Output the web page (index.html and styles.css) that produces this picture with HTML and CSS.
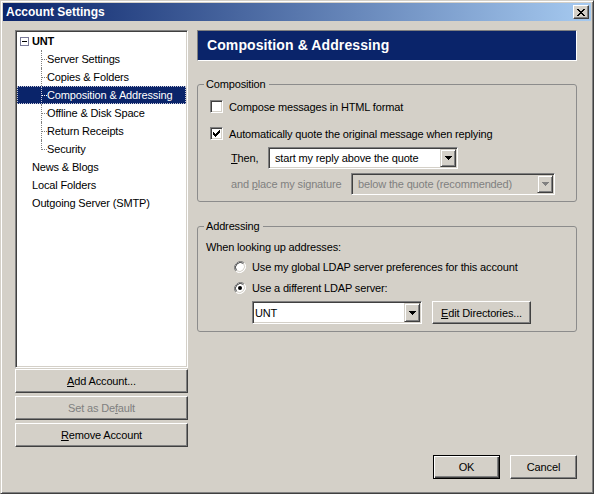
FILE: index.html
```html
<!DOCTYPE html>
<html>
<head>
<meta charset="utf-8">
<title>Account Settings</title>
<link rel="stylesheet" href="styles.css">
</head>
<body>
<div class="window">
  <div class="titlebar">
    <span class="title">Account Settings</span>
    <span class="close"><svg width="8" height="7" viewBox="0 0 8 7" shape-rendering="crispEdges"><path d="M0 0h2v1H0zM6 0h2v1H6zM1 1h2v1H1zM5 1h2v1H5zM2 2h4v1H2zM3 3h2v1H3zM2 4h4v1H2zM1 5h2v1H1zM5 5h2v1H5zM0 6h2v1H0zM6 6h2v1H6z" fill="#000"/></svg></span>
  </div>
  <div class="body">
    <div class="main">
      <div class="sidebar">
        <div class="tree">
          <div class="row root"><span class="twisty"></span><b>UNT</b></div>
          <div class="row child">Server Settings</div>
          <div class="row child">Copies &amp; Folders</div>
          <div class="row child sel">Composition &amp; Addressing</div>
          <div class="row child">Offline &amp; Disk Space</div>
          <div class="row child">Return Receipts</div>
          <div class="row child last">Security</div>
          <div class="row top">News &amp; Blogs</div>
          <div class="row top">Local Folders</div>
          <div class="row top">Outgoing Server (SMTP)</div>
        </div>
        <div class="btn side add"><span><u>A</u>dd Account...</span></div>
        <div class="btn side disabled"><span>Set as De<u>f</u>ault</span></div>
        <div class="btn side"><span><u>R</u>emove Account</span></div>
      </div>
      <div class="panel">
        <div class="header">Composition &amp; Addressing</div>
        <fieldset class="group comp">
          <legend>Composition</legend>
          <div class="opt first">
            <span class="check"></span>
            <span>Compose messages in HTML format</span>
          </div>
          <div class="opt second">
            <span class="check"><svg width="7" height="7" viewBox="0 0 7 7" shape-rendering="crispEdges"><path d="M6 0h1v1H6zM5 1h2v1H5zM0 2h1v1H0zM4 2h3v1H4zM0 3h2v1H0zM3 3h3v1H3zM0 4h5v1H0zM1 5h3v1H1zM2 6h1v1H2z" fill="#000"/></svg></span>
            <span>Automatically quote the original message when replying</span>
          </div>
          <div class="line then">
            <span class="lbl lbl-then"><u>T</u>hen,</span>
            <div class="combo w-then">
              <span class="val">start my reply above the quote</span>
              <span class="drop"><svg width="7" height="4" viewBox="0 0 7 4" shape-rendering="crispEdges"><path d="M0 0h7v1H0zM1 1h5v1H1zM2 2h3v1H2zM3 3h1v1H3z" fill="#000"/></svg></span>
            </div>
          </div>
          <div class="line sig">
            <span class="lbl lbl-sig dis">and <u>p</u>lace my signature</span>
            <div class="combo w-sig disabled">
              <span class="val">below the quote (recommended)</span>
              <span class="drop"><svg width="7" height="4" viewBox="0 0 7 4" shape-rendering="crispEdges"><path d="M0 0h7v1H0zM1 1h5v1H1zM2 2h3v1H2zM3 3h1v1H3z" fill="#808080"/></svg></span>
            </div>
          </div>
        </fieldset>
        <fieldset class="group addr">
          <legend>Addressing</legend>
          <div class="when">When looking up addresses:</div>
          <div class="radio-row r1">
            <svg class="radio" width="12" height="12" viewBox="0 0 12 12"><circle cx="6" cy="6" r="5.5" fill="#fff"/><path d="M10.2 1.8A6 6 0 0 0 1.8 10.2" fill="none" stroke="#808080" stroke-width="1"/><path d="M1.8 10.2A6 6 0 0 0 10.2 1.8" fill="none" stroke="#fff" stroke-width="1"/><path d="M9.5 2.5A5 5 0 0 0 2.5 9.5" fill="none" stroke="#404040" stroke-width="1"/><path d="M2.5 9.5A5 5 0 0 0 9.5 2.5" fill="none" stroke="#d4d0c8" stroke-width="1"/></svg>
            <span>Use my global LDAP server preferences for this account</span>
          </div>
          <div class="radio-row r2">
            <svg class="radio" width="12" height="12" viewBox="0 0 12 12"><circle cx="6" cy="6" r="5.5" fill="#fff"/><path d="M10.2 1.8A6 6 0 0 0 1.8 10.2" fill="none" stroke="#808080" stroke-width="1"/><path d="M1.8 10.2A6 6 0 0 0 10.2 1.8" fill="none" stroke="#fff" stroke-width="1"/><path d="M9.5 2.5A5 5 0 0 0 2.5 9.5" fill="none" stroke="#404040" stroke-width="1"/><path d="M2.5 9.5A5 5 0 0 0 9.5 2.5" fill="none" stroke="#d4d0c8" stroke-width="1"/><circle cx="6" cy="6" r="2" fill="#000"/></svg>
            <span>Use a different LDAP server:</span>
          </div>
          <div class="ldap-row">
            <div class="combo edit w-ldap">
              <span class="val">UNT</span>
              <span class="drop"><svg width="7" height="4" viewBox="0 0 7 4" shape-rendering="crispEdges"><path d="M0 0h7v1H0zM1 1h5v1H1zM2 2h3v1H2zM3 3h1v1H3z" fill="#000"/></svg></span>
            </div>
            <div class="btn edit-dirs"><span><u>E</u>dit Directories...</span></div>
          </div>
        </fieldset>
      </div>
    </div>
    <div class="footer">
      <div class="btn dlg default"><span>OK</span></div>
      <div class="btn dlg"><span>Cancel</span></div>
    </div>
  </div>
</div>
</body>
</html>
```
FILE: styles.css
```css
* { box-sizing: border-box; }
html, body { margin: 0; padding: 0; }
body {
  width: 594px;
  height: 494px;
  background: #d4d0c8;
  font: 11px "Liberation Sans", Arial, sans-serif;
  letter-spacing: -0.15px;
  color: #000;
}
u { text-decoration: underline; text-underline-offset: 1px; }

.window {
  width: 594px;
  height: 494px;
  border: 1px solid;
  border-color: #d4d0c8 #404040 #404040 #d4d0c8;
  box-shadow: inset 1px 1px #fff, inset -1px -1px #808080;
  padding: 2px;
  display: flex;
  flex-direction: column;
  background: #d4d0c8;
}

.titlebar {
  flex: none;
  height: 18px;
  display: flex;
  align-items: center;
  justify-content: space-between;
  padding: 0 2px 0 3px;
  background: linear-gradient(to right, #0a246a, #a6caf0);
}
.title { color: #fff; font-weight: bold; font-size: 12px; line-height: 18px; letter-spacing: 0; }
.close {
  width: 16px;
  height: 14px;
  display: flex;
  align-items: center;
  justify-content: center;
  background: #d4d0c8;
  border: 1px solid;
  border-color: #fff #404040 #404040 #fff;
  box-shadow: inset -1px -1px #808080;
}

.body { flex: 1; padding: 9px 14px 0 12px; display: flex; flex-direction: column; }
.main { display: flex; gap: 9px; }

.sidebar { width: 173px; display: flex; flex-direction: column; }
.tree {
  height: 338px;
  background: #fff;
  border: 1px solid;
  border-color: #808080 #fff #fff #808080;
  box-shadow: inset 1px 1px #404040, inset -1px -1px #d4d0c8;
  padding: 1px;
}
.row { position: relative; height: 18px; line-height: 18px; white-space: nowrap; }
.root { display: flex; align-items: center; padding-left: 3px; }
.twisty {
  width: 9px;
  height: 9px;
  border: 1px solid #7a7a9a;
  margin-right: 3px;
  position: relative;
  background: #fff;
}
.twisty::after {
  content: "";
  position: absolute;
  left: 1px;
  top: 3px;
  width: 5px;
  height: 1px;
  background: #000;
}
.child { padding-left: 30px; }
.child::before {
  content: "";
  position: absolute;
  left: 24px;
  top: 9px;
  width: 6px;
  border-top: 1px dotted #808080;
}
.child::after {
  content: "";
  position: absolute;
  left: 24px;
  top: 0;
  height: 18px;
  border-left: 1px dotted #808080;
}
.child.last::after { height: 10px; }
.top { padding-left: 15px; }
.sel {
  background: #0a246a;
  color: #fff;
  outline: 1px dotted #c8c8d8;
  outline-offset: -1px;
}
.sel::before { border-top-color: #fff; }
.sel::after { border-left-color: #c8c8d8; }

.btn {
  display: flex;
  align-items: center;
  justify-content: center;
  background: #d4d0c8;
  border: 1px solid;
  border-color: #fff #404040 #404040 #fff;
  box-shadow: inset -1px -1px #808080;
  height: 24px;
  white-space: nowrap;
}
.side { margin-top: 3px; }
.side.add { margin-top: 1px; }
.disabled { color: #808080; }

.panel { width: 380px; display: flex; flex-direction: column; }
.header {
  height: 31px;
  background: #0a246a;
  border: 1px solid;
  border-color: #808080 #fff #fff #808080;
  color: #fff;
  font-weight: bold;
  font-size: 14px;
  letter-spacing: 0.1px;
  line-height: 29px;
  padding-left: 9px;
}

.group {
  margin: 0;
  padding: 0 0 6px 0;
  min-width: 0;
  border: 1px solid #8c8c8c;
  border-radius: 3px;
}
.group legend {
  margin-left: 6px;
  padding: 0 3px 0 2px;
  line-height: 13px;
  height: 13px;
}
.comp { margin-top: 17px; }
.addr { margin-top: 18px; padding-bottom: 7px; }

.opt { display: flex; align-items: center; height: 19px; padding-left: 12px; gap: 6px; }
.opt.first { margin-top: 6px; }
.opt.second { margin-top: 8px; }
.check {
  width: 13px;
  height: 13px;
  flex: none;
  background: #fff;
  border: 1px solid;
  border-color: #808080 #fff #fff #808080;
  box-shadow: inset 1px 1px #404040, inset -1px -1px #d4d0c8;
  display: flex;
  align-items: center;
  justify-content: center;
}

.line { display: flex; align-items: center; padding-left: 33px; margin-top: 4px; }
.lbl-then { width: 37px; }
.lbl-sig { width: 120px; }
.dis { color: #808080; }

.combo {
  display: flex;
  align-items: center;
  height: 22px;
  background: #fff;
  border: 1px solid;
  border-color: #808080 #fff #fff #808080;
  box-shadow: inset 1px 1px #404040, inset -1px -1px #d4d0c8;
  padding: 1px;
}
.combo .val { flex: 1; padding-left: 5px; white-space: nowrap; overflow: hidden; }
.combo.edit .val { padding-left: 1px; }
.combo.disabled { background: #d4d0c8; color: #808080; }
.drop {
  width: 16px;
  height: 18px;
  flex: none;
  display: flex;
  align-items: center;
  justify-content: center;
  background: #d4d0c8;
  border: 1px solid;
  border-color: #d4d0c8 #404040 #404040 #d4d0c8;
  box-shadow: inset 1px 1px #fff, inset -1px -1px #808080;
}
.w-then { width: 190px; }
.w-sig { width: 204px; }
.w-ldap { width: 170px; height: 23px; }
.w-ldap .drop { height: 19px; }

.when { height: 18px; line-height: 18px; margin-top: 5px; padding-left: 8px; }
.radio-row { display: flex; align-items: center; gap: 6px; height: 18px; padding-left: 36px; }
.radio-row.r1 { margin-top: 2px; }
.radio-row.r2 { margin-top: 3px; }
.radio { flex: none; }
.ldap-row { display: flex; align-items: center; gap: 10px; padding-left: 54px; margin-top: 4px; }
.edit-dirs { width: 99px; height: 23px; }

.footer { display: flex; justify-content: flex-end; gap: 10px; margin-top: 8px; }
.dlg { width: 67px; }
.default {
  border-color: #000;
  box-shadow: inset 1px 1px #fff, inset -1px -1px #404040, inset -2px -2px #808080;
}
```
